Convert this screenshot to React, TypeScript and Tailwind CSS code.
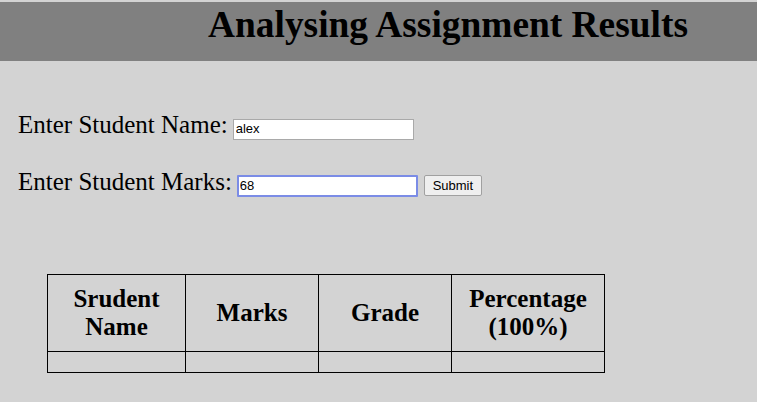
export default function App() {
  return (
    <div className="min-h-[402px] bg-[#d3d3d3] pt-[2px] text-black" style={{ fontFamily: '"Liberation Serif", serif' }}>
      <div className="h-[59px] bg-[#808080] pl-[208px] pt-[2px]">
        <h1 className="text-[37.4px] font-bold leading-[42px]">Analysing Assignment Results</h1>
      </div>

      <div className="pl-[18px] pt-[50px] text-[25px] leading-[28px]">
        <div className="flex items-baseline gap-[5px]">
          <span>Enter Student Name:</span>
          <input
            readOnly
            value="alex"
            className="h-[21px] w-[181px] border border-[#a9a9a9] bg-white px-[2px] text-[13px] outline-none"
            style={{ fontFamily: '"Liberation Sans", Arial, sans-serif' }}
          />
        </div>
        <div className="mt-[28px] flex items-baseline">
          <span>Enter Student Marks:</span>
          <input
            readOnly
            value="68"
            className="ml-[5px] h-[22px] w-[181px] rounded-[1px] border-2 border-[#7b8ce6] bg-white px-[1px] text-[13px] outline-none"
            style={{ fontFamily: '"Liberation Sans", Arial, sans-serif' }}
          />
          <button
            className="ml-[6px] h-[21px] w-[58px] rounded-[2px] border border-[#a0a0a0] bg-[#efefef] text-[13px] leading-none"
            style={{ fontFamily: '"Liberation Sans", Arial, sans-serif' }}
          >
            Submit
          </button>
        </div>
      </div>

      <div className="pl-[47px] pt-[77px]">
        <table className="w-[557px] table-fixed border-collapse border border-black text-[25px] font-bold leading-[28px]">
          <colgroup>
            <col className="w-[138px]" />
            <col className="w-[133px]" />
            <col className="w-[133px]" />
            <col className="w-[153px]" />
          </colgroup>
          <thead>
            <tr className="h-[77px]">
              <th className="border border-black">Srudent<br />Name</th>
              <th className="border border-black">Marks</th>
              <th className="border border-black">Grade</th>
              <th className="border border-black">Percentage<br />(100%)</th>
            </tr>
          </thead>
          <tbody>
            <tr className="h-[21px]">
              <td className="border border-black"></td>
              <td className="border border-black"></td>
              <td className="border border-black"></td>
              <td className="border border-black"></td>
            </tr>
          </tbody>
        </table>
      </div>
    </div>
  );
}
